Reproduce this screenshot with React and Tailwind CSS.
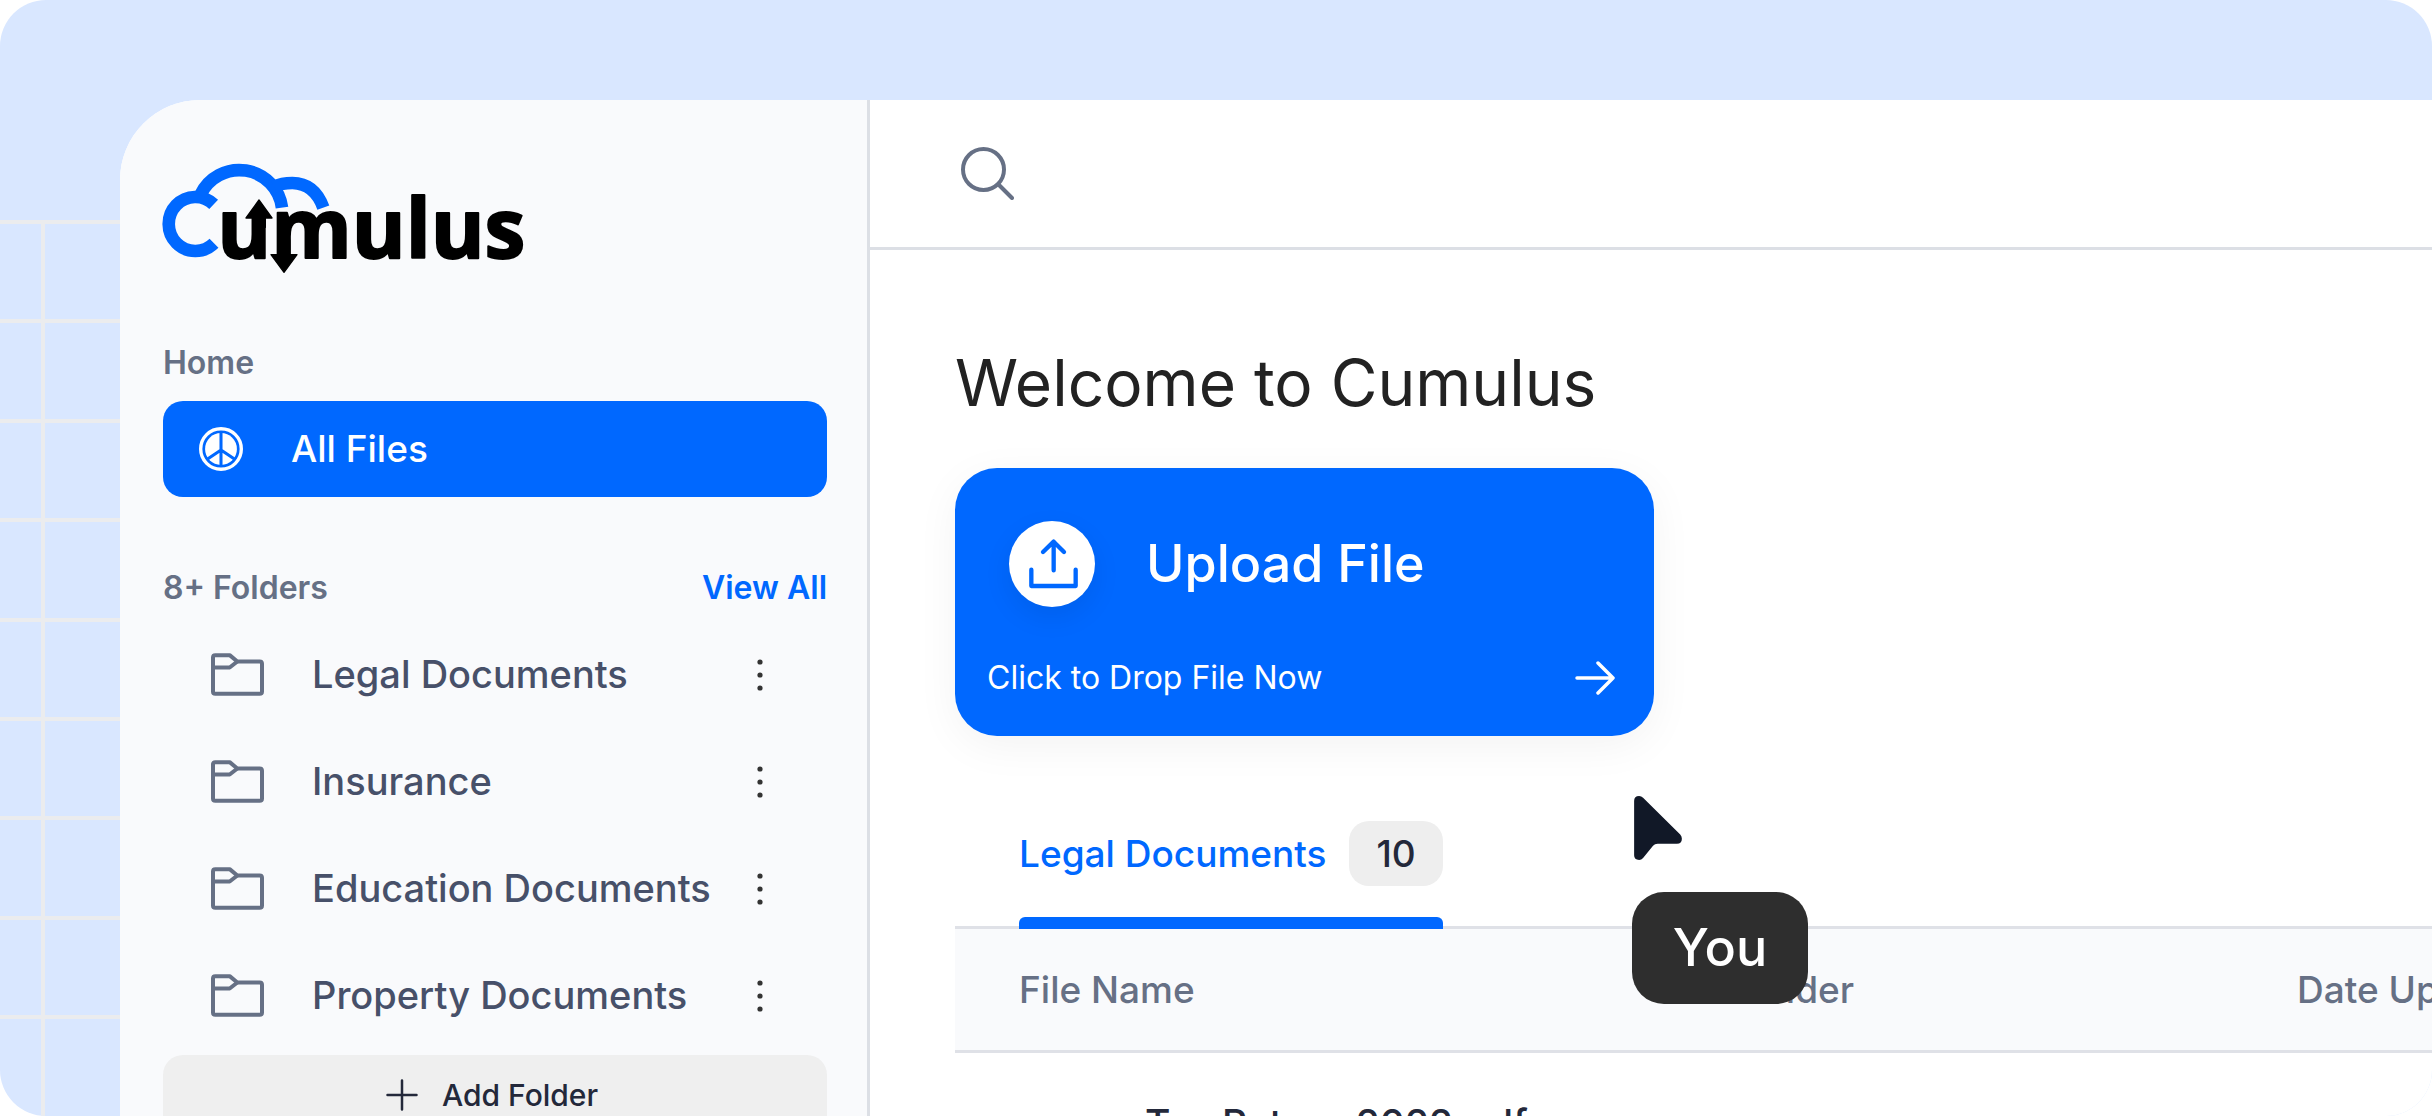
import React from "react";

const folders = [
  "Legal Documents",
  "Insurance",
  "Education Documents",
  "Property Documents",
];

function Logo() {
  return (
    <svg viewBox="69 69 1086 333" className="h-[111px] w-[362px] overflow-visible" role="img" aria-label="Cumulus">
      <g fill="none" stroke="#0068ff" strokeWidth="38">
        <path d="M221 193 A80 81 0 1 0 222 310" strokeLinejoin="round" />
        <path d="M181 165 A129 129 0 0 1 426 203" />
        <path d="M402 140 Q425 129 457 129 Q524 130 550 203" />
      </g>
      <text
        x="232"
        y="353"
        fontFamily="'Open Sans', 'Noto Sans', sans-serif"
        fontWeight="700"
        fontSize="246"
        fill="#000"
        stroke="#000"
        strokeWidth="6"
        strokeLinejoin="round"
      >
        umulus
      </text>
      <g fill="#000" stroke="#000" strokeWidth="4" strokeLinejoin="round">
        <path d="M357 180 L396 234 H376 V262 H338 V234 H318 Z" />
        <path d="M432 397 L393 344 H413 V300 H449 V344 H471 Z" />
      </g>
    </svg>
  );
}

function PeaceIcon() {
  return (
    <svg viewBox="60 53 130 130" className="size-11" fill="none" aria-hidden="true">
      <circle cx="125" cy="118" r="60" stroke="#fff" strokeWidth="10" />
      <circle cx="125" cy="118" r="47" fill="#fff" />
      <path d="M125 68 V168 M125 121 L82 150 M125 121 L168 150" stroke="#0068ff" strokeWidth="9" />
    </svg>
  );
}

function FolderIcon() {
  return (
    <svg viewBox="94 732 159 128" className="h-[43px] w-[53px] shrink-0" fill="none" stroke="#667085" strokeWidth="12" strokeLinejoin="round" aria-hidden="true">
      <path d="M100 745 Q100 738 107 738 H150 L173 757 H240 Q247 757 247 764 V847 Q247 854 240 854 H107 Q100 854 100 847 Z" />
      <path d="M100 775 H150 L173 757" />
    </svg>
  );
}

function DotsIcon() {
  return (
    <svg viewBox="0 0 24 36" className="h-9 w-6" fill="#333" aria-hidden="true">
      <circle cx="12" cy="5" r="2.6" />
      <circle cx="12" cy="18" r="2.6" />
      <circle cx="12" cy="31" r="2.6" />
    </svg>
  );
}

function Sidebar() {
  return (
    <aside className="w-[750px] shrink-0 border-r-[3px] border-[#dcdfe5] bg-[#f9fafc] pt-[63px] pr-10 pl-[43px]">
      <Logo />
      <h2 className="mt-[69px] text-[32px] leading-10 font-semibold text-[#667085]">Home</h2>
      <button className="mt-[18px] flex h-24 w-full items-center gap-12 rounded-[20px] bg-[#0068ff] pl-9 text-[37px] font-medium text-white">
        <PeaceIcon />
        All Files
      </button>
      <div className="mt-[71px] flex justify-between text-[32px] leading-10 font-semibold">
        <h2 className="text-[#667085]">8+ Folders</h2>
        <a href="#all" className="text-[#0068ff]">View All</a>
      </div>
      <ul className="mt-[13px]">
        {folders.map((name) => (
          <li key={name} className="flex h-[107px] items-center pr-[55px] pl-12">
            <a href="#folder" className="flex flex-1 items-center gap-12 text-[38px] font-medium whitespace-nowrap text-[#475069]">
              <FolderIcon />
              {name}
            </a>
            <button aria-label={`Options for ${name}`}>
              <DotsIcon />
            </button>
          </li>
        ))}
      </ul>
      <button className="mt-1.5 flex h-20 w-full items-center justify-center gap-6 rounded-[20px] bg-[#efefef] pr-1.5 text-[30px] font-medium text-[#23283a]">
        <svg viewBox="0 0 32 32" className="size-8" stroke="#23283a" strokeWidth="2.5" strokeLinecap="round" aria-hidden="true">
          <path d="M16 1.5 V30.500 M1.500 16 H30.500" />
        </svg>
        Add Folder
      </button>
    </aside>
  );
}

function UploadCard() {
  return (
    <button className="mt-[45px] block w-[699px] rounded-[42px] bg-[#0068ff] pt-[53px] pr-[39px] pb-[41px] pl-8 text-left text-white shadow-[0_10px_44px_rgba(0,0,0,0.05)]">
      <span className="flex items-center gap-[51px] pl-[22px]">
        <span className="rounded-full bg-white shadow-[0_10px_28px_rgba(0,0,0,0.08)]">
          <svg viewBox="27 34 258 258" className="size-[86px]" fill="none" stroke="#0068ff" strokeWidth="13" strokeLinecap="round" strokeLinejoin="round" aria-hidden="true">
            <path d="M94 180 V229 H227 V180" />
            <path d="M161 96 V182 M129 127 L161 96 L192 127" />
          </svg>
        </span>
        <span className="text-[52px] leading-[64px] font-medium">Upload File</span>
      </span>
      <span className="mt-[54px] flex h-[34px] items-center justify-between text-[32px]">
        Click to Drop File Now
        <svg viewBox="0 0 40 34" className="h-[34px] w-10" fill="none" stroke="#fff" strokeWidth="3.5" strokeLinecap="round" strokeLinejoin="round" aria-hidden="true">
          <path d="M2 17 H38 M23 2 L38 17 L23 32" />
        </svg>
      </span>
    </button>
  );
}

function FileTable() {
  return (
    <table className="w-full min-w-[1800px] table-fixed border-collapse text-left">
      <colgroup>
        <col className="w-[788px]" />
        <col className="w-[554px]" />
        <col />
      </colgroup>
      <thead>
        <tr className="h-[122px] border-b-[3px] border-[#dfe1e7] bg-[#f9fafc] text-[37px] text-[#667085]">
          <th className="pl-16 font-medium">File Name</th>
          <th className="font-medium">Folder</th>
          <th className="font-medium">Date Uploaded</th>
        </tr>
      </thead>
      <tbody>
        <tr className="h-36 text-[39px] text-[#23283a]">
          <td className="pl-[190px] font-medium">Tax Return 2022.pdf</td>
          <td />
          <td />
        </tr>
      </tbody>
    </table>
  );
}

function UserCursor() {
  return (
    <div className="pointer-events-none absolute top-[696px] left-[762px]">
      <svg viewBox="72 47 144 193" className="ml-0.5 h-16 w-12" fill="#111827" aria-hidden="true">
        <path d="M72 62 Q72 47 87 47 Q94 47 99 52 L211 163 Q216 168 216 176 Q216 191 201 191 H143 Q134 191 129 197 L99 234 Q94 240 87 240 Q72 240 72 226 Z" />
      </svg>
      <div className="mt-8 flex h-28 w-44 items-center justify-center rounded-[32px] bg-[#2e2e2e] text-[52px] font-medium text-white">
        You
      </div>
    </div>
  );
}

export default function App() {
  return (
    <div className="relative flex h-screen overflow-hidden rounded-[46px] bg-[#d9e7ff] pt-[100px] pl-[120px] font-['Inter',sans-serif]">
      <div className="absolute inset-y-0 left-0 w-[120px] pt-[220px]" aria-hidden="true">
        <div className="h-full bg-[linear-gradient(90deg,transparent_41px,#ebecee_41px,#ebecee_45px,transparent_45px)]">
          <div className="flex h-[799px] flex-col justify-between">
            {Array.from({ length: 9 }, (_, i) => (
              <div key={i} className="h-1 bg-[#ebecee]" />
            ))}
          </div>
        </div>
      </div>
      <div className="relative flex min-w-0 flex-1 overflow-hidden rounded-tl-[80px] bg-white">
        <Sidebar />
        <main className="relative min-w-0 flex-1 overflow-hidden">
          <header className="flex h-[150px] items-center border-b-[3px] border-[#dcdfe5] pl-[91px]">
            <button aria-label="Search">
              <svg viewBox="0 0 53 53" className="size-[53px]" fill="none" stroke="#667085" strokeWidth="4" strokeLinecap="round" aria-hidden="true">
                <circle cx="22.500" cy="22.500" r="20.500" />
                <path d="M37.500 37.500 L51 51" />
              </svg>
            </button>
          </header>
          <section className="pt-[93px] pl-[85px]">
            <h1 className="text-[64px] leading-[80px] text-[#222]">Welcome to Cumulus</h1>
            <UploadCard />
            <div className="mt-[85px] border-b-[3px] border-[#dfe1e7] pl-16">
              <button className="-mb-[3px] block w-[424px]">
                <span className="flex items-center justify-between text-[37px] font-medium text-[#0068ff]">
                  Legal Documents
                  <span className="flex h-[65px] w-[94px] items-center justify-center rounded-[20px] bg-[#eee] text-[37px] text-[#23283a]">10</span>
                </span>
                <span className="mt-[31px] block h-3 rounded-t-md bg-[#0068ff]" />
              </button>
            </div>
            <FileTable />
          </section>
          <UserCursor />
        </main>
      </div>
    </div>
  );
}
